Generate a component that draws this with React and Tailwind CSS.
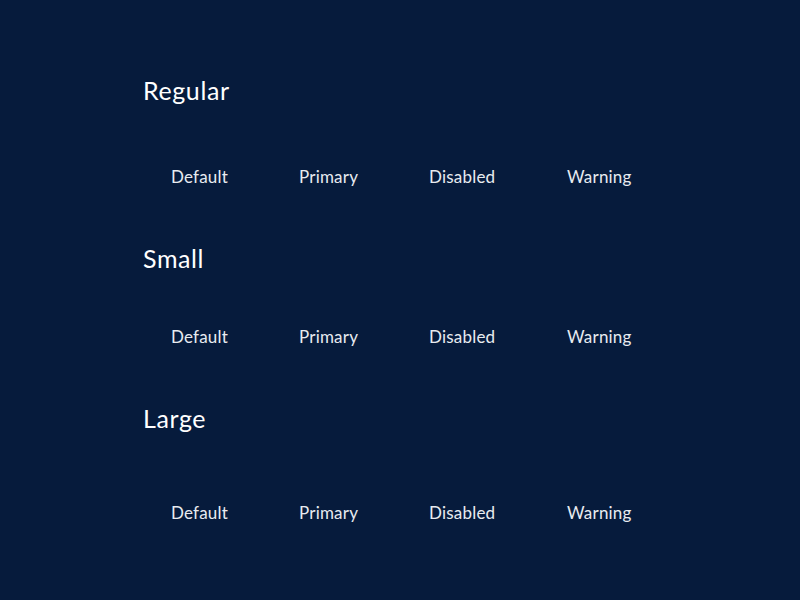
const sizes = [
  { title: 'Regular', btn: 'h-12', gap: 'mb-[41px]' },
  { title: 'Small', btn: 'h-8', gap: 'mb-[49px]' },
  { title: 'Large', btn: 'h-16', gap: 'mb-[33px]' },
]

const variants = [
  { label: 'Default', w: 'w-[112px]' },
  { label: 'Primary', w: 'w-[114px]' },
  { label: 'Disabled', w: 'w-[122px]' },
  { label: 'Warning', w: 'w-[119px]' },
]

export default function App() {
  return (
    <div className="min-h-[600px] w-full bg-[#061b3c] px-[143px] pt-[74px] font-['Lato','Noto_Sans',sans-serif]">
      {sizes.map((s) => (
        <section key={s.title} className={s.gap}>
          <h2 className="text-[25px] leading-8 tracking-[0.6px] text-white">{s.title}</h2>
          <div className="mt-[47px] flex items-center gap-4">
            {variants.map((v) => (
              <button
                key={v.label}
                className={`${s.btn} ${v.w} flex items-center px-7 text-[17px] tracking-[0.2px] whitespace-nowrap text-[#e8ebf0] bg-transparent`}
              >
                {v.label}
              </button>
            ))}
          </div>
        </section>
      ))}
    </div>
  )
}
